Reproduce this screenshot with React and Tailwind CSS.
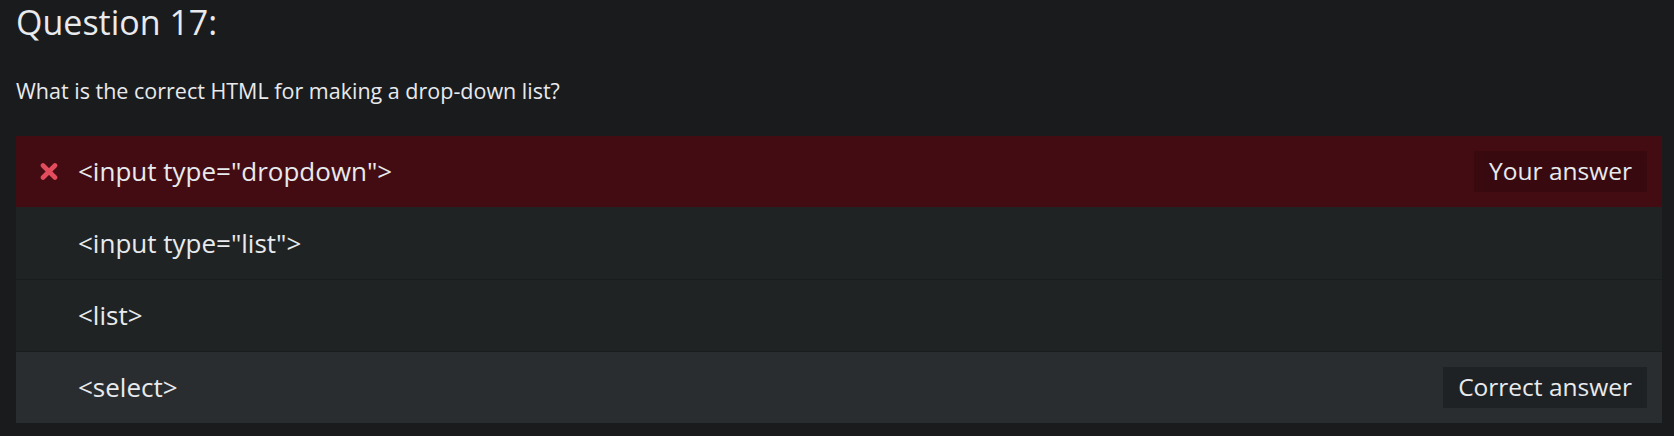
import React from 'react';

const options = [
  { text: '<input type="dropdown">', wrong: true, badge: 'Your answer' },
  { text: '<input type="list">' },
  { text: '<list>' },
  { text: '<select>', correct: true, badge: 'Correct answer' },
];

const CrossIcon = () => (
  <svg width="18" height="17" viewBox="0 0 18 17" className="shrink-0">
    <path d="M3 2.5 L15 14.5 M15 2.5 L3 14.5" stroke="#e24c5c" strokeWidth="4.6" strokeLinecap="round" />
  </svg>
);

const App = () => {
  return (
    <div
      className="min-h-screen bg-[#1a1b1d] text-[#e8eaed] pl-4 pr-3 pt-[1px]"
      style={{ fontFamily: '"Segoe UI", "Open Sans", sans-serif' }}
    >
      <h2 className="text-[34px] leading-[1.2] font-normal mt-[1px]">Question 17:</h2>
      <p className="text-[21.5px] mt-[32px]">What is the correct HTML for making a drop-down list?</p>

      <div className="mt-[29px] flex flex-col">
        {options.map((opt, i) => {
          let rowBg = 'bg-[#202324]';
          if (opt.wrong) rowBg = 'bg-[#430c12]';
          if (opt.correct) rowBg = 'bg-[#2a2d30]';
          let badgeBg = opt.wrong ? 'bg-[#380a10]' : 'bg-[#1f2224]';
          return (
            <div
              key={i}
              className={`flex items-center pl-6 pr-[15px] ${rowBg} ${i === 0 ? 'h-[71px]' : i === 1 ? 'h-[72px]' : 'h-[72px] border-t border-[#1a1c1e]'}`}
            >
              <div className="w-[38px] flex items-center">
                {opt.wrong && <CrossIcon />}
              </div>
              <span className="text-[26px] flex-1">{opt.text}</span>
              {opt.badge && (
                <span className={`h-[41px] px-[15px] flex items-center text-[24.5px] ${badgeBg}`}>{opt.badge}</span>
              )}
            </div>
          );
        })}
      </div>
    </div>
  );
};

export default App;
